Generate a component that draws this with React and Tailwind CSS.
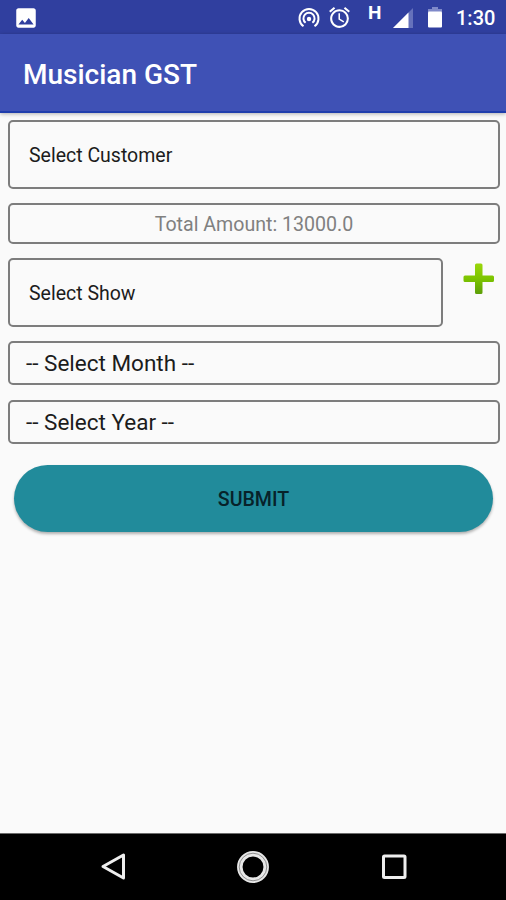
import { MdImage, MdAlarm } from "react-icons/md";

const HotspotIcon = () => (
  <svg width="22" height="22" viewBox="0 0 22 22" fill="none" stroke="#fff" strokeWidth="2">
    <path d="M5.500 19.200 A9.500 9.500 0 1 1 16.500 19.200" />
    <path d="M7.600 15.800 A5.600 5.600 0 1 1 14.400 15.800" />
    <circle cx="11" cy="12" r="2.200" fill="#fff" stroke="none" />
  </svg>
);

const SignalIcon = () => (
  <svg width="20" height="20" viewBox="0 0 20 20">
    <path d="M20 0 V20 H0 Z" fill="#6571bb" />
    <path d="M15.500 4.500 V20 H0 Z" fill="#fff" />
  </svg>
);

const BatteryIcon = () => (
  <svg width="14" height="21" viewBox="0 0 14 21">
    <path d="M4 0 H10 V2 H14 V5 H0 V2 H4 Z" fill="#7f89c9" />
    <rect y="4.500" width="14" height="16" rx="1" fill="#fff" />
  </svg>
);

const PlusIcon = () => (
  <svg width="32" height="32" viewBox="0 0 32 32">
    <defs>
      <linearGradient id="plus" x1="0" y1="0" x2="0" y2="1">
        <stop offset="0" stopColor="#9ad60a" />
        <stop offset="0.5" stopColor="#7cc400" />
        <stop offset="1" stopColor="#5c9e08" />
      </linearGradient>
    </defs>
    <path
      d="M13.500 0.500 H18 Q19.500 0.500 19.500 2 V12.500 H29.500 Q31 12.500 31 14 V17.500 Q31 19 29.500 19 H19.500 V29.500 Q19.500 31 18 31 H13.500 Q12 31 12 29.500 V19 H2 Q0.500 19 0.500 17.500 V14 Q0.500 12.500 2 12.500 H12 V2 Q12 0.500 13.500 0.500 Z"
      fill="url(#plus)"
    />
  </svg>
);

function StatusBar() {
  return (
    <div className="flex h-[34px] items-start bg-[#303f9f] text-white">
      <MdImage className="ml-[13px] mt-[5px] size-[26px]" />
      <div className="ml-[259px] mt-[7px]">
        <HotspotIcon />
      </div>
      <MdAlarm className="ml-[7px] mt-[5px] size-[25px]" />
      <span className="ml-[16px] mt-[3px] w-[13px] text-[19px] leading-5 font-bold">
        H
      </span>
      <div className="ml-[12px] mt-[8px]">
        <SignalIcon />
      </div>
      <div className="ml-[15px] mt-[7px]">
        <BatteryIcon />
      </div>
      <span className="ml-[14px] mt-[6px] text-[20px] leading-6 font-medium">
        1:30
      </span>
    </div>
  );
}

function NavBar() {
  return (
    <div className="flex h-[67px] items-center border-t border-[#6b6b6b] bg-black pl-[100px]">
      <svg width="28" height="30" viewBox="0 0 28 30">
        <path
          d="M23.500 3 V26 L3 14.500 Z"
          fill="none"
          stroke="#eee"
          strokeWidth="3"
          strokeLinejoin="round"
        />
      </svg>
      <svg className="ml-[108px]" width="34" height="34" viewBox="0 0 34 34">
        <circle cx="17" cy="17" r="13.200" fill="none" stroke="#e8e8e8" strokeWidth="5.500" />
        <circle cx="17" cy="17" r="13.800" fill="none" stroke="#777" strokeWidth="0.800" />
      </svg>
      <svg className="ml-[111px]" width="26" height="26" viewBox="0 0 26 26">
        <rect x="2.500" y="2" width="21.500" height="21.500" rx="1" fill="none" stroke="#eee" strokeWidth="3" />
      </svg>
    </div>
  );
}

function App() {
  return (
    <div className="flex h-[900px] w-[506px] flex-col bg-[#fafafa] font-['Roboto',sans-serif] text-[#1c1c1c]">
      <StatusBar />
      <div className="flex h-[79px] items-center border-b-2 border-[#1f3dac] bg-[#3f51b5] pl-[23px] text-[28px] font-medium text-white shadow-[0_1px_4px_rgba(0,0,0,0.3)]">
        <h1 className="pt-[4px]">Musician GST</h1>
      </div>

      <div className="flex grow flex-col gap-[15px] pt-[7px] pr-[6px] pl-[8px]">
        <div className="flex h-[69px] items-center rounded-[5px] border-2 border-[#7d7d7d] pt-[3px] pl-[19px] text-[19.5px]">
          Select Customer
        </div>
        <div className="-mt-px flex h-[41px] items-center justify-center rounded-[5px] border-2 border-[#7d7d7d] pt-[3px] text-[19.6px] text-[#808080]">
          Total Amount: 13000.0
        </div>
        <div className="-mt-px flex h-[69px]">
          <div className="flex w-[435px] items-center rounded-[5px] border-2 border-[#7d7d7d] pt-[3px] pl-[19px] text-[19.5px]">
            Select Show
          </div>
          <div className="ml-[20px] mt-[5px]">
            <PlusIcon />
          </div>
        </div>
        <div className="-mt-px flex h-[44px] items-center rounded-[5px] border-2 border-[#7d7d7d] pt-[2px] pl-[16px] text-[22.5px]">
          -- Select Month --
        </div>
        <div className="flex h-[44px] items-center rounded-[5px] border-2 border-[#7d7d7d] pt-[2px] pl-[16px] text-[22.5px]">
          -- Select Year --
        </div>
        <button className="mt-[6px] mr-[7px] ml-[6px] h-[67px] rounded-full bg-[#218b9b] pt-[3px] text-[19.6px] font-medium text-[#07222a] shadow-[0_2px_3px_rgba(0,0,0,0.3)]">
          SUBMIT
        </button>
      </div>

      <NavBar />
    </div>
  );
}

export default App;
